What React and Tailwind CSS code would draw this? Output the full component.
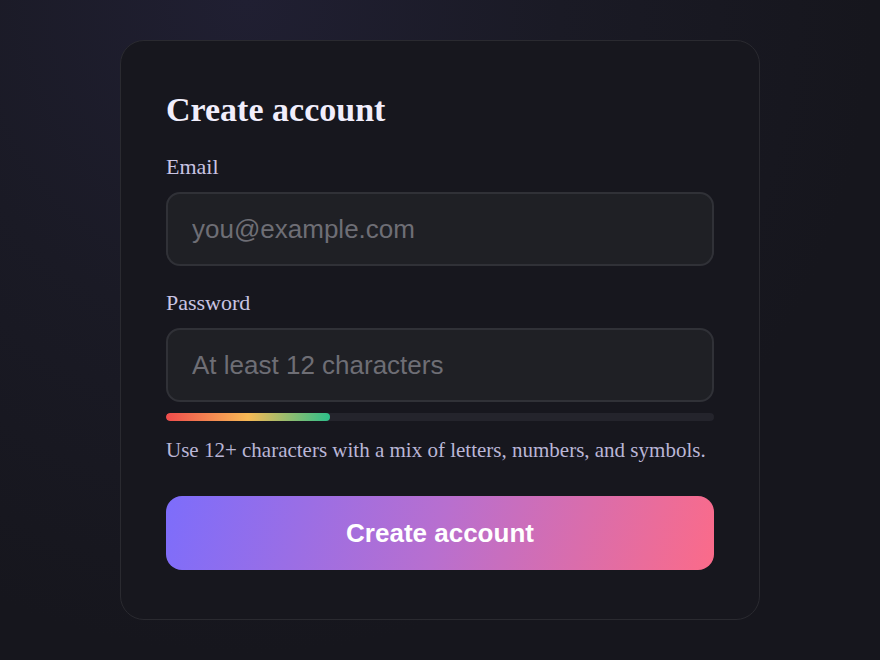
import { useState } from "react"

const SignupCard = () => {
  const [email, setEmail] = useState("")
  const [password, setPassword] = useState("")
  const strength = 30

  return (
    <div className="w-[640px] mx-auto bg-[#17171e] border border-[#2a2a30] rounded-[24px] px-[45px] py-[49px] font-['Liberation_Serif',serif]">
      <h1 className="text-[34px] leading-[40px] font-bold text-[#f1eefc]">Create account</h1>

      <form onSubmit={(e) => e.preventDefault()} className="flex flex-col mt-[24px]">
        <label htmlFor="email" className="text-[22px] leading-[26px] text-[#c9c4e3]">Email</label>
        <input
          id="email"
          type="email"
          value={email}
          onChange={(e) => setEmail(e.target.value)}
          placeholder="you@example.com"
          className="mt-[12px] h-[74px] px-[24px] rounded-[14px] bg-[#1f2025] border-2 border-[#303137] text-[26px] text-[#e5e5ea] placeholder:text-[#6e6e75] font-['Liberation_Sans',sans-serif] outline-none"
        />

        <label htmlFor="password" className="mt-[24px] text-[22px] leading-[26px] text-[#c9c4e3]">Password</label>
        <input
          id="password"
          type="password"
          value={password}
          onChange={(e) => setPassword(e.target.value)}
          placeholder="At least 12 characters"
          className="mt-[12px] h-[74px] px-[24px] rounded-[14px] bg-[#1f2025] border-2 border-[#303137] text-[26px] text-[#e5e5ea] placeholder:text-[#6e6e75] font-['Liberation_Sans',sans-serif] outline-none"
        />

        <div className="mt-[11px] h-[8px] rounded-full bg-[#24242c] overflow-hidden">
          <div
            className="h-full rounded-full bg-[linear-gradient(90deg,#f04c4c_0%,#f7b955_50%,#2dbf8a_100%)]"
            style={{ width: `${strength}%` }}
          />
        </div>

        <p className="mt-[17px] text-[21px] leading-[24px] text-[#bab6d6]">
          Use 12+ characters with a mix of letters, numbers, and symbols.
        </p>

        <button
          type="submit"
          className="mt-[34px] h-[74px] rounded-[16px] bg-[linear-gradient(105deg,#7d6dfb_0%,#b86fcf_50%,#fb6b89_100%)] text-white text-[26px] font-bold font-['Liberation_Sans',sans-serif]"
        >
          Create account
        </button>
      </form>
    </div>
  )
}

export default function App() {
  return (
    <div className="h-[660px] w-full pt-[40px] bg-[#16161d] bg-[radial-gradient(ellipse_at_28%_0%,#201f32_0%,#1a1a25_35%,#16161d_70%)] overflow-hidden">
      <SignupCard />
    </div>
  )
}
